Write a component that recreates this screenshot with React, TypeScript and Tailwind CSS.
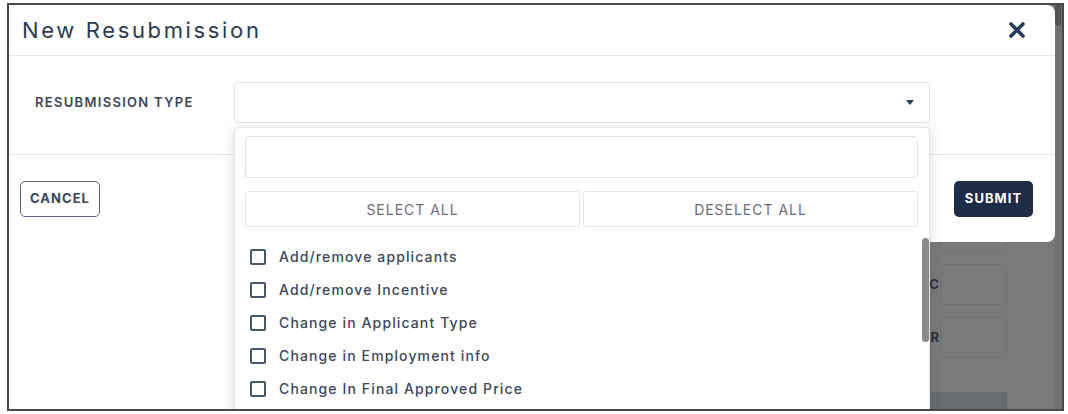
const items = [
  "Add/remove applicants",
  "Add/remove Incentive",
  "Change in Applicant Type",
  "Change in Employment info",
  "Change In Final Approved Price",
];

const font = { fontFamily: '"Inter", "Liberation Sans", sans-serif' };

const App = () => {
  return (
    <div className="w-[1068px] h-[414px] bg-white pt-[3px] pl-[7px]" style={font}>
      <div className="relative w-[1057px] h-[408px] border-2 border-[#4a4a4a] overflow-hidden flex">
        {/* page behind the overlay */}
        <div className="w-[225px] bg-white" />
        <div className="flex-1 bg-[#7a7a7a] flex flex-col items-end pr-[48px] pt-[206px]">
          <div className="flex items-center h-[41px]">
            <div className="w-[67px] h-[41px] rounded-[4px] border border-[#727272]" />
          </div>
          <div className="flex items-center h-[41px] mt-[12px]">
            <span className="text-[13px] font-bold text-[#2b2f36] mr-[1px]">ABC</span>
            <div className="w-[67px] h-[41px] rounded-[4px] border border-[#727272]" />
          </div>
          <div className="flex items-center h-[41px] mt-[12px]">
            <span className="text-[13px] font-bold text-[#2b2f36] mr-[1px]">NUMBER</span>
            <div className="w-[67px] h-[41px] rounded-[4px] border border-[#727272]" />
          </div>
          <div className="w-[77px] h-[40px] mt-[34px] bg-[#686c70]" />
        </div>
        <div className="w-[7px] bg-[#727272] flex flex-col">
          <div className="w-[6px] h-[21px] bg-[#565656] rounded-b-full" />
        </div>

        {/* modal */}
        <div className="absolute left-0 top-0 w-[1046px] h-[237px] bg-white rounded-r-[8px] flex flex-col">
          <div className="h-[51px] border-b border-[#e6e6e6] flex items-center justify-between pl-[13px] pr-[29px]">
            <h3 className="text-[22px] text-[#2e3a4e] tracking-[0.12em]">New Resubmission</h3>
            <svg width="18" height="16" viewBox="0 0 18 16" className="text-[#253a58]">
              <path d="M3 2 L15 14 M15 2 L3 14" stroke="currentColor" strokeWidth="3.6" strokeLinecap="round" />
            </svg>
          </div>

          <div className="h-[99px] border-b border-[#e6e6e6] flex items-start pt-[26px]">
            <div className="w-[225px] h-[41px] pl-[26px] flex items-center">
              <span className="text-[13px] font-semibold text-[#3b4759] tracking-[0.1em]">RESUBMISSION TYPE</span>
            </div>
            <div className="w-[696px] h-[41px] rounded-[4px] border border-[#e3e3e3] flex items-center justify-end pr-[15px]">
              <svg width="8" height="5" viewBox="0 0 8 5">
                <path d="M0 0 H8 L4 5 Z" fill="#2d3a4e" />
              </svg>
            </div>
          </div>

          <div className="flex-1 flex items-start justify-between pt-[26px] pl-[11px] pr-[22px]">
            <button className="w-[80px] h-[36px] rounded-[5px] border-[1.5px] border-[#5b6579] text-[13px] font-bold text-[#3b4759] tracking-[0.08em]">
              CANCEL
            </button>
            <button className="w-[79px] h-[36px] rounded-[5px] bg-[#1f2c48] text-[13px] font-bold text-white tracking-[0.08em]">
              SUBMIT
            </button>
          </div>
        </div>

        {/* dropdown menu */}
        <div className="absolute left-[225px] top-[122px] w-[696px] h-[310px] bg-white border border-[#e3e3e3] rounded-t-[4px] shadow-[0_2px_14px_rgba(0,0,0,0.13)] pl-[10px] pr-[11px] pt-[8px]">
          <div className="h-[42px] rounded-[4px] border border-[#e3e3e3]" />
          <div className="flex gap-[3px] mt-[13px]">
            <button className="flex-1 h-[36px] rounded-[3px] border border-[#e6e6e6] text-[14px] text-[#6e6b7b] tracking-[0.07em]">SELECT ALL</button>
            <button className="flex-1 h-[36px] rounded-[3px] border border-[#e6e6e6] text-[14px] text-[#6e6b7b] tracking-[0.07em]">DESELECT ALL</button>
          </div>
          <div className="mt-[13px] flex flex-col">
            {items.map((item) => (
              <label key={item} className="h-[33px] flex items-center gap-[13px] pl-[5px]">
                <span className="w-[16px] h-[16px] border-2 border-[#4b5568] rounded-[2px]" />
                <span className="text-[14px] font-medium text-[#3c475a] tracking-[0.08em]">{item}</span>
              </label>
            ))}
          </div>
          <div className="absolute right-0 top-[110px] w-[7px] h-[104px] rounded-full bg-[#8a8a8a]" />
        </div>
      </div>
    </div>
  );
};

export default App;
